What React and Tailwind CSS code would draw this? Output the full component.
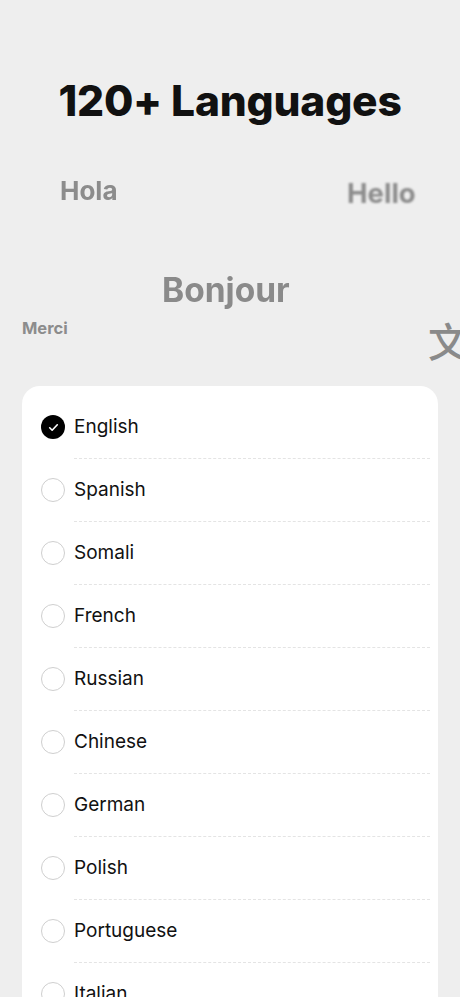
import React from 'react';

const languages = [
  'English',
  'Spanish',
  'Somali',
  'French',
  'Russian',
  'Chinese',
  'German',
  'Polish',
  'Portuguese',
  'Italian',
];

function CheckCircle({ checked }) {
  if (checked) {
    return (
      <span className="flex h-6 w-6 shrink-0 items-center justify-center rounded-full bg-black">
        <svg width="13" height="13" viewBox="0 0 24 24" fill="none" stroke="white" strokeWidth="3" strokeLinecap="round" strokeLinejoin="round">
          <path d="M5 12.5l4.5 4.5L19 7" />
        </svg>
      </span>
    );
  }
  return <span className="h-6 w-6 shrink-0 rounded-full border border-[#cfcfcf] bg-white" />;
}

export default function App() {
  return (
    <div
      className="relative h-[997px] w-[460px] overflow-hidden bg-[#eeeeee]"
      style={{ fontFamily: 'Inter, "Noto Sans CJK SC", sans-serif' }}
    >
      <h1 className="pt-[75px] text-center text-[42.5px] font-extrabold leading-[52px] tracking-[-0.2px] text-[#111111]">
        120+ Languages
      </h1>

      {/* floating greetings */}
      <div className="relative h-[259px]">
        <span className="absolute left-[60px] top-[44px] text-[26px] font-bold text-[#8c8c8c] blur-[0.6px]">Hola</span>
        <span className="absolute left-[347px] top-[46px] text-[27.5px] font-bold text-[#8c8c8c] blur-[1.2px]">Hello</span>
        <span className="absolute left-[162px] top-[138px] text-[33.5px] font-bold text-[#8a8a8a] blur-[0.3px]">Bonjour</span>
        <span className="absolute left-[22px] top-[189px] text-[16.5px] font-bold text-[#8c8c8c]">Merci</span>
        <span className="absolute left-[428px] top-[186px] text-[40px] font-medium text-[#8a8a8a]">文</span>
      </div>

      <div className="mx-[22px] rounded-[18px] bg-white pt-[10px]">
        {languages.map((lang, i) => (
          <div key={lang}>
            <div className="flex h-[62px] items-center gap-[9px] pl-[19px]">
              <CheckCircle checked={i === 0} />
              <span className="text-[19px] text-[#111111]">{lang}</span>
            </div>
            <div className="ml-[52px] mr-[8px] border-t border-dashed border-[#e4e4e4]" />
          </div>
        ))}
      </div>
    </div>
  );
}
